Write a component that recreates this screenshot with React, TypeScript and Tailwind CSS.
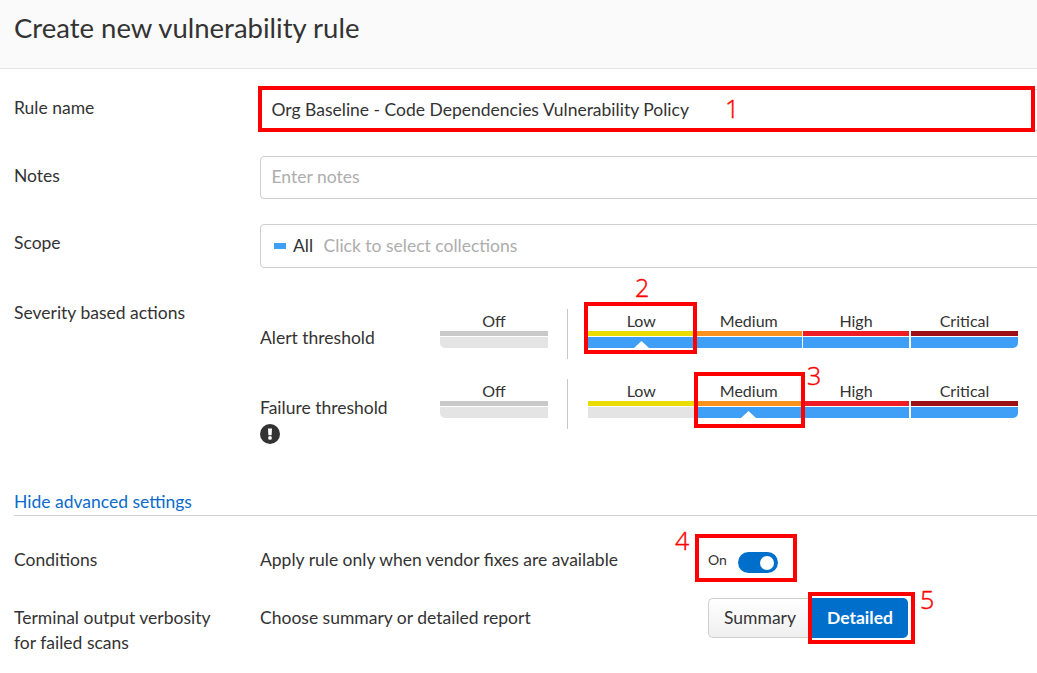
type Level = { name: string; color: string };

const levels: Level[] = [
  { name: 'Low', color: 'bg-[#ebdc00]' },
  { name: 'Medium', color: 'bg-[#f9931d]' },
  { name: 'High', color: 'bg-[#ee1c25]' },
  { name: 'Critical', color: 'bg-[#9b1016]' },
];

const gaps = ['border-r', 'border-r', 'border-r-2', ''];

function Threshold({ selected }: { selected: number }) {
  return (
    <div className="flex h-[50px] text-[16px] leading-[22px]">
      <div className="w-[108px]">
        <div className="h-[22px] pt-[1px] text-center">Off</div>
        <div className="h-[5px] bg-[#c9c9c9]" />
        <div className="mt-px h-[11px] rounded-bl-[5px] bg-[#e4e4e4]" />
      </div>
      <div className="mr-5 ml-[19px] w-px bg-[#c8c8c8]" />
      <div className="grid w-[430px] grid-cols-[107.5px_107.5px_108px_107px]">
        {levels.map((level, i) => (
          <div key={level.name} className={`border-white ${gaps[i]}`}>
            <div className="h-[22px] pt-[1px] text-center">{level.name}</div>
            <div className={`h-[5px] ${level.color}`} />
            <div
              className={`mt-px flex h-[11px] items-end justify-center ${i >= selected ? 'bg-[#3f9ff7]' : 'bg-[#e4e4e4]'} ${i === 3 ? 'rounded-br-[5px]' : ''}`}
            >
              {i === selected && (
                <svg width="15" height="7" viewBox="0 0 15 7" className="block">
                  <path d="M0 7 L7.5 0 L15 7Z" fill="#fff" />
                </svg>
              )}
            </div>
          </div>
        ))}
      </div>
    </div>
  );
}

function Callout({ box, digit, label }: { box: string; digit: string; label: string }) {
  return (
    <>
      <div className={`absolute border-4 border-[#fe0000] ${box}`} />
      <span
        className={`absolute font-['Open_Sans','Noto_Sans',sans-serif] text-[25px] leading-[30px] font-light text-[#fe0000] [-webkit-text-stroke:0.4px_#fe0000] ${digit}`}
      >
        {label}
      </span>
    </>
  );
}

export default function App() {
  return (
    <div className="relative h-[673px] w-[1037px] overflow-hidden bg-white font-['Lato',sans-serif] text-[17.5px] leading-[25px] text-[#333]">
      <header className="h-[69px] border-b border-[#e3e3e3] bg-[#fafafa] pt-[10px] pl-[14px] text-[27.5px] leading-[36px]">
        Create new vulnerability rule
      </header>

      <main className="pl-[14px]">
        <div className="flex h-[87px] pt-5">
          <div className="w-[246px] shrink-0 pt-[6px]">Rule name</div>
          <div className="flex h-[42px] w-[800px] shrink-0 items-center rounded border border-[#cfcfcf] pb-[2px] pl-[10.5px]">
            Org Baseline - Code Dependencies Vulnerability Policy
          </div>
        </div>
        <div className="flex h-[68px]">
          <div className="w-[246px] shrink-0 pt-[7px]">Notes</div>
          <div className="flex h-[43px] w-[800px] shrink-0 items-center rounded border border-[#cfcfcf] pb-[2px] pl-[10.5px] text-[#adadad]">
            Enter notes
          </div>
        </div>
        <div className="flex h-[85px]">
          <div className="w-[246px] shrink-0 pt-[6px]">Scope</div>
          <div className="flex h-[44px] w-[800px] shrink-0 items-center rounded border border-[#cfcfcf] pl-[13px]">
            <span className="mr-[7px] h-[6px] w-3 bg-[#3f9ff7]" />
            <span className="mr-[10.5px] pb-[2px]">All</span>
            <span className="pb-[2px] text-[#adadad]">Click to select collections</span>
          </div>
        </div>

        <section className="flex h-[180px]">
          <div className="w-[246px] shrink-0">
            <div className="-mt-[9px]">Severity based actions</div>
          </div>
          <div className="w-[180px] shrink-0">
            <div className="h-[70px] pt-4">Alert threshold</div>
            <div className="pt-4">Failure threshold</div>
            <svg width="20" height="20" viewBox="0 0 20 20" className="mt-[4px] block">
              <circle cx="10" cy="10" r="10" fill="#333" />
              <path d="M8 4.6h4l-.4 6.6h-3.2z" fill="#fff" />
              <circle cx="10" cy="13.9" r="1.9" fill="#fff" />
            </svg>
          </div>
          <div className="flex flex-col gap-5">
            <Threshold selected={0} />
            <Threshold selected={1} />
          </div>
        </section>

        <div className="h-[27px] border-b border-[#d2d2d2] text-[#0b6bcb]">Hide advanced settings</div>

        <div className="flex h-[82px] pt-[31px]">
          <div className="w-[246px]">Conditions</div>
          <div className="w-[448px]">Apply rule only when vendor fixes are available</div>
          <div className="flex text-[14px]">
            <span className="w-[30px]">On</span>
            <span className="mt-[5px] flex h-[21px] w-10 items-center justify-end rounded-full bg-[#006fcc] pr-[4.5px]">
              <span className="mt-px size-[14px] rounded-full bg-white" />
            </span>
          </div>
        </div>
        <div className="flex">
          <div className="w-[246px] pt-[7px]">
            Terminal output verbosity
            <br />
            for failed scans
          </div>
          <div className="w-[448px] pt-[7px]">Choose summary or detailed report</div>
          <div className="flex h-10 w-[200px]">
            <button className="w-[103px] rounded-l-[5px] border border-r-0 border-[#cfcfcf] bg-linear-to-b from-white to-[#efefef] pb-[2px]">
              Summary
            </button>
            <button className="flex-1 rounded-r-[5px] bg-[#006fcc] pb-[2px] pl-px font-bold text-white">Detailed</button>
          </div>
        </div>
      </main>

      <Callout box="left-[258px] top-[86px] h-[46px] w-[777px]" digit="left-[725px] top-[93px]" label="1" />
      <Callout box="left-[584px] top-[302px] h-[52px] w-[113px]" digit="left-[635px] top-[272px]" label="2" />
      <Callout box="left-[694px] top-[372px] h-[56px] w-[111px]" digit="left-[807px] top-[360px]" label="3" />
      <Callout box="left-[695px] top-[534px] h-[48px] w-[102px]" digit="left-[675px] top-[525px]" label="4" />
      <Callout box="left-[808px] top-[592px] h-[52px] w-[107px]" digit="left-[920px] top-[584px]" label="5" />
    </div>
  );
}
